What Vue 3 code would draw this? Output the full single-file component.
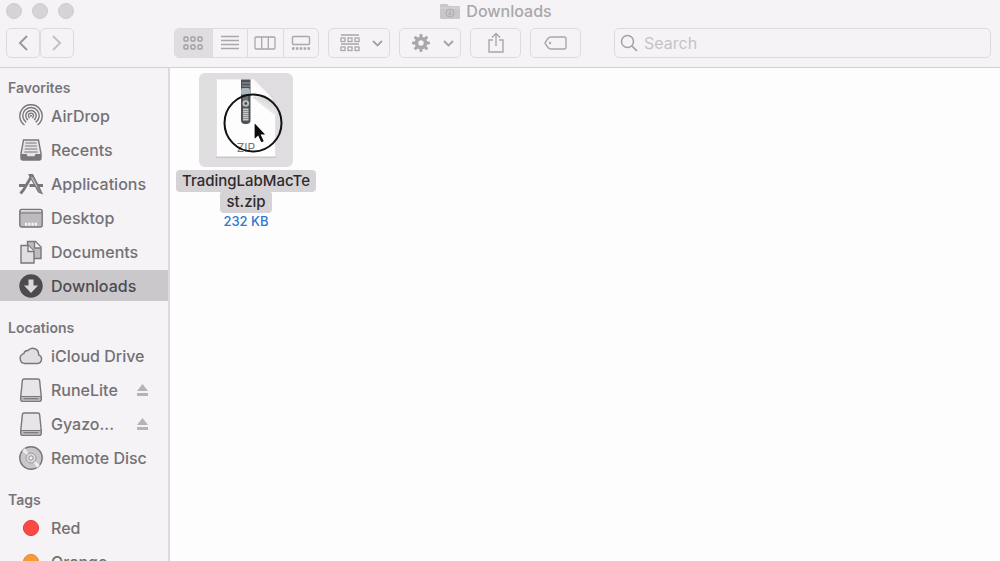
<script setup>
import { ref } from 'vue'

const search = ref('')
const cells = [0, 7, 14]
const teeth = [0, 45, 90, 135, 180, 225, 270, 315]
const zipper = [0, 2, 4, 6, 8, 10]
const sections = [
  {
    title: 'Favorites',
    items: [
      { name: 'AirDrop', icon: 'airdrop' },
      { name: 'Recents', icon: 'recents' },
      { name: 'Applications', icon: 'apps' },
      { name: 'Desktop', icon: 'desktop' },
      { name: 'Documents', icon: 'documents' },
      { name: 'Downloads', icon: 'downloads', active: true },
    ],
  },
  {
    title: 'Locations',
    items: [
      { name: 'iCloud Drive', icon: 'cloud' },
      { name: 'RuneLite', icon: 'drive', eject: true },
      { name: 'Gyazo...', icon: 'drive', eject: true },
      { name: 'Remote Disc', icon: 'disc' },
    ],
  },
  {
    title: 'Tags',
    items: [
      { name: 'Red', icon: 'red' },
      { name: 'Orange', icon: 'orange' },
    ],
  },
]
</script>

<template>
  <div class="finder">
    <header class="header">
      <div class="titlebar">
        <div class="lights">
          <button type="button" aria-label="Close"></button>
          <button type="button" aria-label="Minimize"></button>
          <button type="button" aria-label="Zoom"></button>
        </div>
        <h1 class="title">
          <svg width="20" height="17" viewBox="0 0 20 17">
            <path d="M0 2q0-1 1-1h6l2 2h10q1 0 1 1v11q0 1-1 1H1q-1 0-1-1z" fill="#c9c7ca" />
            <path d="M0 5h20" stroke="#d9d7da" />
            <circle cx="10" cy="10" r="4" fill="none" stroke="#adabae" />
            <path d="M10 7.5v4.5M8 10.3l2 2 2-2" fill="none" stroke="#adabae" />
          </svg>
          <span>Downloads</span>
        </h1>
      </div>
      <div class="toolbar">
        <div class="nav">
          <button type="button" class="btn" aria-label="Back">
            <svg width="12" height="18" viewBox="0 0 12 18"><path d="M10 2 3 9l7 7" fill="none" stroke="#9b999c" stroke-width="2" /></svg>
          </button>
          <button type="button" class="btn" aria-label="Forward">
            <svg width="12" height="18" viewBox="0 0 12 18"><path d="m2 2 7 7-7 7" fill="none" stroke="#c3c1c4" stroke-width="2" /></svg>
          </button>
        </div>
        <div class="views">
          <button type="button" class="on" aria-label="Icon view">
            <svg width="20" height="16" viewBox="0 0 20 16" fill="none" stroke="#a19fa2" stroke-width="1.4">
              <g v-for="x in cells" :key="x">
                <rect :x="x + 1" y="2" width="4" height="4" rx="1" />
                <rect :x="x + 1" y="10" width="4" height="4" rx="1" />
              </g>
            </svg>
          </button>
          <button type="button" aria-label="List view">
            <svg width="20" height="16" viewBox="0 0 20 16"><path d="M1 1.500h18M1 5.500h18M1 9.500h18M1 13.500h18" stroke="#a9a7aa" stroke-width="1.400" /></svg>
          </button>
          <button type="button" aria-label="Column view">
            <svg width="22" height="16" viewBox="0 0 22 16"><path d="M2 2h18q1 0 1 1v10q0 1-1 1H2q-1 0-1-1V3q0-1 1-1zM7.700 2v12M14.300 2v12" fill="none" stroke="#a9a7aa" stroke-width="1.300" /></svg>
          </button>
          <button type="button" aria-label="Gallery view">
            <svg width="20" height="16" viewBox="0 0 20 16"><rect x="1.500" y="1.500" width="17" height="8" rx="1" fill="none" stroke="#a9a7aa" stroke-width="1.400" /><path d="M1 13.500h18" stroke="#a9a7aa" stroke-width="2.400" stroke-dasharray="2.500 1.375" /></svg>
          </button>
        </div>
        <button type="button" class="btn menu" aria-label="Group items">
          <svg width="20" height="18" viewBox="0 0 20 18" fill="none" stroke="#a9a7aa" stroke-width="1.300">
            <path d="M1 1h18M1 10h18" />
            <g v-for="x in cells" :key="x">
              <rect :x="x + 1" y="4" width="4" height="3.500" />
              <rect :x="x + 1" y="13" width="4" height="3.500" />
            </g>
          </svg>
          <svg width="11" height="7" viewBox="0 0 11 7"><path d="m1 1 4.500 4.500L10 1" fill="none" stroke="#a3a1a4" stroke-width="1.800" /></svg>
        </button>
        <button type="button" class="btn menu" aria-label="Actions">
          <svg width="20" height="20" viewBox="0 0 20 20">
            <g fill="#a9a7aa">
              <rect v-for="a in teeth" :key="a" x="8.500" y="1" width="3" height="5" rx="1" :transform="`rotate(${a} 10 10)`" />
            </g>
            <circle cx="10" cy="10" r="4.500" fill="none" stroke="#a9a7aa" stroke-width="3.600" />
          </svg>
          <svg width="11" height="7" viewBox="0 0 11 7"><path d="m1 1 4.500 4.500L10 1" fill="none" stroke="#a3a1a4" stroke-width="1.800" /></svg>
        </button>
        <button type="button" class="btn wide" aria-label="Share">
          <svg width="18" height="22" viewBox="0 0 18 22"><path d="M6 8H2v12h14V8h-4M9 14V2M5 5.500 9 1.500l4 4" fill="none" stroke="#a9a7aa" stroke-width="1.400" /></svg>
        </button>
        <button type="button" class="btn wide" aria-label="Edit tags">
          <svg width="24" height="16" viewBox="0 0 24 16"><path d="M7 2h13q2 0 2 2v8q0 2-2 2H7q-2 0-3-1.500L1.500 9q-.7-1 0-2L4 3.500Q5 2 7 2z" fill="none" stroke="#a9a7aa" stroke-width="1.400" /><circle cx="6" cy="8" r="1.200" fill="#a9a7aa" /></svg>
        </button>
        <label class="search">
          <svg width="18" height="18" viewBox="0 0 18 18"><circle cx="7.500" cy="7.500" r="6" fill="none" stroke="#a3a1a4" stroke-width="1.500" /><path d="m12 12 5 5" stroke="#a3a1a4" stroke-width="1.700" /></svg>
          <input v-model="search" type="text" placeholder="Search" aria-label="Search">
        </label>
      </div>
    </header>
    <div class="body">
      <nav class="sidebar">
        <section v-for="s in sections" :key="s.title">
          <h2>{{ s.title }}</h2>
          <ul>
            <li v-for="i in s.items" :key="i.name" :class="{ active: i.active }">
              <a href="#">
                <svg width="24" height="24" viewBox="0 0 24 24" fill="none" stroke="#79777a" stroke-width="1.400">
                  <template v-if="i.icon === 'airdrop'">
                    <path d="M5.500 21a11.200 11.200 0 1 1 13 0M7.300 18.400a8.200 8.200 0 1 1 9.400 0M9 15.900a5.200 5.200 0 1 1 6 0M10.800 13.800a2.500 2.500 0 1 1 2.400 0" />
                    <circle cx="12" cy="11.800" r="1" fill="#79777a" stroke="none" />
                  </template>
                  <template v-else-if="i.icon === 'recents'">
                    <path d="M4.500 2h15l2.500 13.500V20q0 2-2 2H4q-2 0-2-2v-4.500z" fill="#e6e4e7" />
                    <path d="M2 16h5.500l1 2.300h7l1-2.300H22v4q0 2-2 2H4q-2 0-2-2z" fill="#79777a" stroke="none" />
                    <path d="M6.500 5h11M6 8h12M5.700 11h12.600M5.300 14h13.400" stroke-width="1.200" />
                  </template>
                  <template v-else-if="i.icon === 'apps'">
                    <path d="M10 2.500h3.500L20 15l3 6.500-3.500-1.500z" fill="#8c8a8d" stroke-width="1.200" />
                    <path d="M13.500 2.500 4.500 18 1.500 21.500" stroke-width="2.800" />
                    <path d="M0 13.500h7.500M10.500 13.500H24" stroke-width="3" />
                    <path d="m12.500 5 5.500 10" stroke="#d5d3d6" stroke-width="1" />
                  </template>
                  <template v-else-if="i.icon === 'desktop'">
                    <rect x=".8" y="3.500" width="22.400" height="17.500" rx="2" fill="#bdbbbe" />
                    <path d="M2 4.800h20" stroke="#e8e6e9" stroke-width="1.200" />
                    <path d="M1 7h22" stroke-width="1" />
                    <path d="M6 18.300h12" stroke="#f4f2f5" stroke-width="3" stroke-dasharray="2.250 1" />
                  </template>
                  <template v-else-if="i.icon === 'documents'">
                    <path d="M8.500 1.500h8l5.500 5.500v11.500H8.500z" fill="#bdbbbe" />
                    <path d="M15.500 1.500v6.500H22" fill="#f4f2f5" />
                    <path d="M2 5.500h7.500l5.500 5.500v12H2z" fill="#e1dfe2" />
                    <path d="M9 5.500v6h6" fill="#f4f2f5" />
                  </template>
                  <template v-else-if="i.icon === 'downloads'">
                    <circle cx="12" cy="12" r="11.700" fill="#4d4b4e" stroke="none" />
                    <path d="M9.500 5.500h5v6H19l-7 7.500-7-7.500h4.500z" fill="#dad8db" stroke="none" />
                  </template>
                  <template v-else-if="i.icon === 'cloud'">
                    <path d="M6 19.500a5 5 0 0 1-1.200-9.800A4 4 0 0 1 9 6.500a6 6 0 0 1 10.600 4.300A4.500 4.500 0 0 1 18.500 19.500z" fill="#e1dfe2" />
                  </template>
                  <template v-else-if="i.icon === 'drive'">
                    <path d="M5 1h14q1.400 0 1.600 1.400L22.200 18v3.500q0 2-2 2H3.800q-2 0-2-2V18L3.400 2.400Q3.600 1 5 1z" fill="#e7e5e8" />
                    <path d="M2 18.500h20v3q0 1.800-1.800 1.800H3.800Q2 23.300 2 21.500z" fill="#bfbdc0" stroke-width="1" />
                    <path d="M4.500 20.700h15" stroke-width="1.200" />
                  </template>
                  <template v-else-if="i.icon === 'disc'">
                    <circle cx="12" cy="12" r="11.200" fill="#c9c7ca" />
                    <path d="M12 12 3 5l3-3zM12 12l9 7-3 3z" fill="#eeecef" stroke="none" />
                    <circle cx="12" cy="12" r="5" fill="#dddbde" stroke="#9c9a9d" stroke-width="1" />
                    <circle cx="12" cy="12" r="2.200" fill="#f2f0f3" stroke="#8c8a8d" stroke-width="1" />
                  </template>
                  <circle v-else-if="i.icon === 'red'" cx="12" cy="12" r="7.600" fill="#fb4a46" stroke="#e23f3b" stroke-width="1" />
                  <circle v-else cx="12" cy="12" r="7.600" fill="#f79b36" stroke="#e08a2c" stroke-width="1" />
                </svg>
                <span>{{ i.name }}</span>
              </a>
              <button v-if="i.eject" type="button" class="eject" :aria-label="`Eject ${i.name}`">
                <svg width="11" height="12" viewBox="0 0 11 12"><path d="M5.500 0 11 7H0zM0 9h11v3H0z" fill="#b5b3b6" /></svg>
              </button>
            </li>
          </ul>
        </section>
      </nav>
      <main class="files">
        <figure class="file">
          <div class="thumb">
            <svg width="94" height="94" viewBox="0 0 94 94">
              <defs>
                <linearGradient id="fold" x1="0" y1="1" x2="1" y2="0">
                  <stop offset="0" stop-color="#c2c0c3" />
                  <stop offset=".35" stop-color="#fff" />
                  <stop offset="1" stop-color="#e9e7ea" />
                </linearGradient>
                <linearGradient id="shade" x1="1" y1="0" x2="0.4" y2="1">
                  <stop offset="0" stop-color="#c9c7ca" />
                  <stop offset="1" stop-color="#fdfdfd" />
                </linearGradient>
              </defs>
              <path d="M17 7h38l22 22v56H17z" fill="#c8c6c9" />
              <path d="M17.500 6.500H55L76.500 29v54.500h-59z" fill="#fdfdfd" />
              <path d="M53 24l20-1 3.500 6v14z" fill="url(#shade)" />
              <path d="M51 6.500h4L75 27q-11-6-20-1 2-11-4-19.500z" fill="url(#fold)" />
              <path d="M42 6.500h9.500V47q0 4-4 4H46q-4 0-4-4z" fill="#4f5254" />
              <path d="M43 10h8M43 13h8" stroke="#9da1a3" />
              <rect x="42" y="15" width="9" height="7" rx="2" fill="#a9b9be" />
              <rect x="44" y="21" width="5" height="8" fill="#6b7275" />
              <circle cx="46.800" cy="30.500" r="3.300" fill="#b9bdbf" />
              <circle cx="46.800" cy="30.500" r="1.300" fill="#3c3f41" />
              <rect x="44" y="35" width="5.500" height="13" fill="#8b8f91" />
              <path v-for="z in zipper" :key="z" :d="`M44 ${36.5 + z}h5.500`" stroke="#d6d9da" stroke-width=".8" />
              <text x="47" y="79" text-anchor="middle" class="kind">ZIP</text>
            </svg>
            <svg class="pointer" width="60" height="60" viewBox="0 0 60 60">
              <circle cx="30" cy="30" r="28.500" fill="none" stroke="#111" stroke-width="2" />
              <path d="M31 29v18l4-3.500 3 6.500 3.500-1.500-3-6.500h5z" fill="#0b0b0b" stroke="#fff" stroke-width="1.200" />
            </svg>
          </div>
          <figcaption>
            <span class="name"><span>TradingLabMacTe</span><span>st.zip</span></span>
            <span class="size">232 KB</span>
          </figcaption>
        </figure>
      </main>
    </div>
  </div>
</template>

<style>
html,
body {
  overflow: hidden;
}
</style>

<style scoped>
.finder {
  height: 100vh;
  display: flex;
  flex-direction: column;
  overflow: hidden;
  background: #fefdfe;
  font-family: Inter, "Liberation Sans", sans-serif;
  color: #737174;
}
.finder * {
  box-sizing: border-box;
}
svg {
  display: block;
  flex: none;
}
button {
  padding: 0;
  border: 0;
  background: none;
  font: inherit;
}
.header {
  flex: none;
  background: #f5f3f6;
  border-bottom: 1px solid #d3d1d4;
  padding-bottom: 9px;
}
.titlebar {
  display: grid;
  grid-template-columns: 1fr auto 1fr;
  align-items: center;
  height: 22px;
  margin-bottom: 6px;
}
.lights {
  display: flex;
  gap: 10px;
  padding-left: 6px;
}
.lights button {
  width: 16px;
  height: 16px;
  border-radius: 50%;
  background: #d6d4d7;
  border: 1px solid #cdcbce;
}
.title {
  display: flex;
  align-items: center;
  gap: 6px;
  margin: 0;
  padding-right: 8px;
  font-size: 16px;
  line-height: 22px;
  font-weight: 500;
  color: #a9a7aa;
}
.toolbar {
  display: flex;
  height: 30px;
  padding: 0 9px 0 6px;
}
.btn,
.views,
.search {
  border: 1px solid #dddbde;
  border-radius: 5px;
}
.btn {
  display: flex;
  align-items: center;
  justify-content: center;
}
.nav {
  display: flex;
  margin-right: 100px;
}
.nav .btn {
  width: 34px;
}
.views {
  display: flex;
  width: 145px;
  margin-right: 9px;
  overflow: hidden;
}
.views button {
  flex: 1;
  display: flex;
  align-items: center;
  justify-content: center;
}
.views button + button {
  border-left: 1px solid #dddbde;
}
.views .on {
  background: #dfdde0;
  flex-grow: 1.06;
}
.menu {
  width: 62px;
  margin-right: 9px;
  gap: 12px;
  padding-left: 5px;
}
.wide {
  width: 51px;
  margin-right: 9px;
}
.search {
  flex: 1;
  display: flex;
  align-items: center;
  gap: 6px;
  margin-left: 24px;
  padding-left: 5px;
}
.search input {
  flex: 1;
  min-width: 0;
  padding: 0;
  border: 0;
  outline: 0;
  background: none;
  font: 400 16px/24px Inter, "Liberation Sans", sans-serif;
  color: #737174;
}
.search input::placeholder {
  color: #c5c3c6;
  opacity: 1;
}
.body {
  flex: 1;
  min-height: 0;
  display: flex;
}
.sidebar {
  flex: none;
  width: 170px;
  padding-top: 10px;
  background: #f5f3f6;
  border-right: 2px solid #dcdadd;
  overflow: hidden;
}
.sidebar section {
  margin-bottom: 17px;
}
h2 {
  margin: 0 0 2px;
  padding-left: 8px;
  font-size: 14px;
  line-height: 20px;
  font-weight: 600;
  color: #78767a;
}
ul {
  display: grid;
  gap: 3px;
  margin: 0;
  padding: 0;
  list-style: none;
}
li {
  display: flex;
  align-items: center;
  height: 31px;
  padding: 0 20px 0 19px;
}
li a {
  flex: 1;
  display: flex;
  align-items: center;
  gap: 8px;
  font-size: 16px;
  line-height: 20px;
  font-weight: 500;
  color: inherit;
  text-decoration: none;
  white-space: nowrap;
}
li a span {
  padding-top: 1px;
}
.active {
  background: #cac8cb;
  color: #4d4b4e;
}
.files {
  flex: 1;
  padding: 5px 6px;
}
.file {
  display: flex;
  flex-direction: column;
  align-items: center;
  width: 140px;
  margin: 0;
}
.thumb {
  position: relative;
  border-radius: 6px;
  background: #dfdde0;
}
.kind {
  font-size: 12px;
  fill: #77757a;
}
.pointer {
  position: absolute;
  left: 24px;
  top: 20px;
}
figcaption {
  display: flex;
  flex-direction: column;
  align-items: center;
  margin-top: 3px;
}
.name {
  display: flex;
  flex-direction: column;
  align-items: center;
  font-size: 15px;
  line-height: 22px;
  font-weight: 500;
  color: #2d2b2e;
}
.name span {
  padding: 0 6px;
  border-radius: 4px;
  background: #d5d3d6;
}
.name span + span {
  margin-top: -1px;
}
.size {
  font-size: 13px;
  line-height: 16px;
  font-weight: 500;
  color: #2f78d0;
}
</style>
